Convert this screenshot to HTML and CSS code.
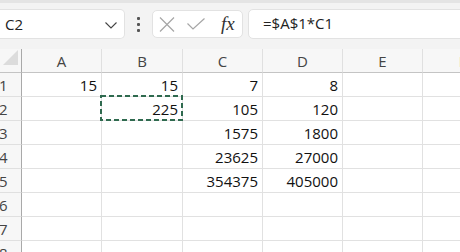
FILE: index.html
```html
<!DOCTYPE html>
<html lang="en">
<head>
  <meta charset="UTF-8" />
  <title>Sheet</title>
  <link rel="stylesheet" href="styles.css">
</head>
<body>
  <header class="toolbar">
    <div class="namebox">
      <span>C2</span>
      <svg class="chev" width="12" height="7" viewBox="0 0 12 7"><path d="M0.5 0.5 L6 6 L11.5 0.5" fill="none" stroke="#444" stroke-width="1.1"/></svg>
    </div>
    <div class="grip"><i></i><i></i><i></i></div>
    <div class="fxbox">
      <svg width="16" height="15" viewBox="0 0 16 15"><path d="M1 0.5 L15 14.5 M15 0.5 L1 14.5" stroke="#a6a6a6" stroke-width="1.2" fill="none"/></svg>
      <svg width="18" height="12" viewBox="0 0 18 12"><path d="M0.5 5.5 L6 11 L17.5 0.5" stroke="#a6a6a6" stroke-width="1.2" fill="none"/></svg>
      <span class="fx">fx</span>
    </div>
    <div class="formula">=$A$1*C1</div>
  </header>

  <div class="sheet">
    <div class="corner"><span class="tri"></span></div>
    <div class="colhead">A</div>
    <div class="colhead">B</div>
    <div class="colhead">C</div>
    <div class="colhead">D</div>
    <div class="colhead">E</div>
    <div class="colhead">F</div>

    <div class="rowhead">1</div>
    <div class="cell">15</div>
    <div class="cell">15</div>
    <div class="cell">7</div>
    <div class="cell">8</div>
    <div class="cell"></div>
    <div class="cell"></div>

    <div class="rowhead">2</div>
    <div class="cell"></div>
    <div class="cell copy">225
      <svg class="ants" width="83" height="26" viewBox="0 0 83 26"><rect x="1" y="1" width="81" height="24" fill="none" stroke="#2f6a4f" stroke-width="2" stroke-dasharray="5 3"/></svg>
    </div>
    <div class="cell">105</div>
    <div class="cell">120</div>
    <div class="cell"></div>
    <div class="cell"></div>

    <div class="rowhead">3</div>
    <div class="cell"></div>
    <div class="cell"></div>
    <div class="cell">1575</div>
    <div class="cell">1800</div>
    <div class="cell"></div>
    <div class="cell"></div>

    <div class="rowhead">4</div>
    <div class="cell"></div>
    <div class="cell"></div>
    <div class="cell">23625</div>
    <div class="cell">27000</div>
    <div class="cell"></div>
    <div class="cell"></div>

    <div class="rowhead">5</div>
    <div class="cell"></div>
    <div class="cell"></div>
    <div class="cell">354375</div>
    <div class="cell">405000</div>
    <div class="cell"></div>
    <div class="cell"></div>

    <div class="rowhead">6</div>
    <div class="cell"></div>
    <div class="cell"></div>
    <div class="cell"></div>
    <div class="cell"></div>
    <div class="cell"></div>
    <div class="cell"></div>

    <div class="rowhead">7</div>
    <div class="cell"></div>
    <div class="cell"></div>
    <div class="cell"></div>
    <div class="cell"></div>
    <div class="cell"></div>
    <div class="cell"></div>

    <div class="rowhead">8</div>
    <div class="cell"></div>
    <div class="cell"></div>
    <div class="cell"></div>
    <div class="cell"></div>
    <div class="cell"></div>
    <div class="cell"></div>
  </div>
</body>
</html>
```

FILE: styles.css
```css
body {
  margin: 0;
  width: 460px;
  height: 252px;
  overflow: hidden;
  background: #f3f3f3;
  font-family: 'Open Sans', sans-serif;
  color: #111;
}

.toolbar {
  display: flex;
  align-items: center;
  height: 46px;
  border-top: 3px solid #e4e4e4;
  padding-bottom: 0;
}

.namebox {
  display: flex;
  align-items: center;
  justify-content: space-between;
  width: 112px;
  height: 28px;
  padding: 0 7px 0 5px;
  margin-top: -4px;
  background: #fff;
  border: 1px solid #e2e2e2;
  border-left: none;
  border-radius: 0 5px 5px 0;
  font-size: 15px;
  color: #222;
}

.chev {
  margin-top: 2px;
}

.grip {
  display: flex;
  flex-direction: column;
  gap: 3px;
  margin: -4px 12px 0 12px;
}

.grip i {
  width: 3px;
  height: 3px;
  background: #555;
  border-radius: 1px;
}

.fxbox {
  display: flex;
  align-items: center;
  width: 91px;
  height: 28px;
  margin-top: -4px;
  padding-left: 6px;
  gap: 12px;
  background: #fff;
  border: 1px solid #e2e2e2;
  border-radius: 5px;
  box-sizing: border-box;
}

.fx {
  font-family: 'Liberation Serif', serif;
  font-style: italic;
  font-size: 19px;
  color: #333;
  margin-left: 4px;
}

.formula {
  flex: 1;
  height: 28px;
  margin: -4px -6px 0 5px;
  padding-left: 14px;
  line-height: 27px;
  background: #fff;
  border: 1px solid #e2e2e2;
  border-radius: 5px;
  font-size: 15px;
  color: #222;
}

.sheet {
  display: grid;
  grid-template-columns: 22px 80px 81px 80px 80px 80px 80px;
  grid-auto-rows: 24px;
  background: #fff;
  margin-top: 0;
}

.corner,
.colhead,
.rowhead {
  background: #f7f7f7;
  color: #444;
  font-size: 15px;
  box-sizing: border-box;
}

.corner {
  position: relative;
  border-right: 1px solid #a9a9a9;
  border-bottom: 1px solid #c4c4c4;
}

.tri {
  position: absolute;
  right: 3px;
  bottom: 7px;
  width: 0;
  height: 0;
  border-left: 15px solid transparent;
  border-bottom: 15px solid #dcdcdc;
}

.colhead {
  text-align: center;
  line-height: 24px;
  border-right: 1px solid #e0e0e0;
  border-bottom: 1px solid #c4c4c4;
}

.rowhead {
  line-height: 25px;
  padding-left: 0;
  text-indent: -1px;
  border-right: 1px solid #a9a9a9;
  border-bottom: 1px solid #e0e0e0;
}

.cell {
  text-align: right;
  padding-right: 4px;
  line-height: 25px;
  font-size: 15px;
  border-right: 1px solid #e1e1e1;
  border-bottom: 1px solid #e1e1e1;
  box-sizing: border-box;
}

.copy {
  position: relative;
}

.ants {
  position: absolute;
  left: -2px;
  top: -2px;
}
```
